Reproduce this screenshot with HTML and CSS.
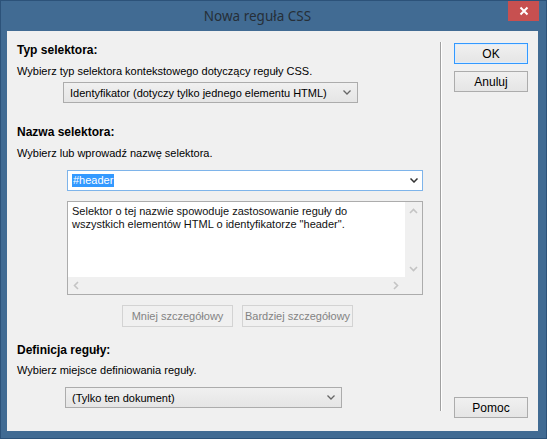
FILE: index.html
```html
<!DOCTYPE html>
<html lang="pl">
<head>
<meta charset="utf-8">
<title>Nowa reguła CSS</title>
<link rel="stylesheet" href="styles.css">
</head>
<body>
<div class="window">
  <div class="titlebar">
    <span class="title">Nowa reguła CSS</span>
    <div class="close">
      <svg width="10" height="10" viewBox="0 0 10 10"><path d="M1.5 1.5 L8.5 8.5 M8.5 1.5 L1.5 8.5" stroke="#fff" stroke-width="2"/></svg>
    </div>
  </div>
  <div class="client">
    <div class="main">
      <div class="heading first">Typ selektora:</div>
      <div class="desc">Wybierz typ selektora kontekstowego dotyczący reguły CSS.</div>
      <div class="select sel-type">
        <span>Identyfikator (dotyczy tylko jednego elementu HTML)</span>
        <svg class="chev" width="8" height="5" viewBox="0 0 8 5"><path d="M0.5 0.5 L4 4 L7.5 0.5" fill="none" stroke="#666" stroke-width="1.3"/></svg>
      </div>

      <div class="heading second">Nazwa selektora:</div>
      <div class="desc">Wybierz lub wprowadź nazwę selektora.</div>
      <div class="combo">
        <span class="hl">#header</span>
        <svg class="chev dark" width="8" height="5" viewBox="0 0 8 5"><path d="M0.5 0.5 L4 4 L7.5 0.5" fill="none" stroke="#333" stroke-width="1.5"/></svg>
      </div>
      <div class="textbox">
        <div class="tb-row">
          <div class="tb-text">Selektor o tej nazwie spowoduje zastosowanie reguły do wszystkich elementów HTML o identyfikatorze "header".</div>
          <div class="vscroll">
            <svg width="9" height="6" viewBox="0 0 9 6"><path d="M1 5 L4.5 1.5 L8 5" fill="none" stroke="#c4c4c4" stroke-width="1.6"/></svg>
            <svg width="9" height="6" viewBox="0 0 9 6"><path d="M1 1 L4.5 4.5 L8 1" fill="none" stroke="#c4c4c4" stroke-width="1.6"/></svg>
          </div>
        </div>
        <div class="hscroll">
          <svg width="6" height="9" viewBox="0 0 6 9"><path d="M5 1 L1.5 4.5 L5 8" fill="none" stroke="#c4c4c4" stroke-width="1.6"/></svg>
          <svg width="6" height="9" viewBox="0 0 6 9"><path d="M1 1 L4.5 4.5 L1 8" fill="none" stroke="#c4c4c4" stroke-width="1.6"/></svg>
          <div class="corner"></div>
        </div>
      </div>
      <div class="spec-buttons">
        <div class="btn disabled">Mniej szczegółowy</div>
        <div class="btn disabled">Bardziej szczegółowy</div>
      </div>

      <div class="heading third">Definicja reguły:</div>
      <div class="desc">Wybierz miejsce definiowania reguły.</div>
      <div class="select sel-def">
        <span>(Tylko ten dokument)</span>
        <svg class="chev" width="8" height="5" viewBox="0 0 8 5"><path d="M0.5 0.5 L4 4 L7.5 0.5" fill="none" stroke="#666" stroke-width="1.3"/></svg>
      </div>
    </div>
    <div class="separator"></div>
    <div class="side">
      <div class="btn default">OK</div>
      <div class="btn cancel">Anuluj</div>
      <div class="spacer"></div>
      <div class="btn help">Pomoc</div>
    </div>
  </div>
</div>
</body>
</html>
```

FILE: styles.css
```css
html, body {
  margin: 0;
  padding: 0;
  background: #416b93;
}

.window {
  width: 547px;
  height: 439px;
  box-sizing: border-box;
  border: 1px solid #2c5279;
  background: #416b93;
  display: flex;
  flex-direction: column;
  font-family: "Liberation Sans", Arial, sans-serif;
  font-size: 11px;
  color: #000;
  white-space: nowrap;
}

.titlebar {
  position: relative;
  height: 29px;
  display: flex;
  align-items: center;
  justify-content: center;
}

.title {
  font-family: "Noto Sans", "Open Sans", sans-serif;
  font-size: 13.5px;
  color: #262f38;
  margin-right: 32px;
  margin-top: 1px;
}

.close {
  position: absolute;
  top: 0;
  right: 7px;
  width: 31px;
  height: 20px;
  background: #c75050;
  display: flex;
  align-items: center;
  justify-content: center;
}

.client {
  margin: 1px 8px 7px 6px;
  height: 400px;
  background: #f0f0f0;
  display: flex;
}

.main {
  width: 423px;
  padding-left: 10px;
  display: flex;
  flex-direction: column;
  align-items: flex-start;
}

.heading {
  font-weight: bold;
  font-size: 12px;
  line-height: 15px;
  height: 15px;
}
.heading.first { margin-top: 12px; }
.heading.second { margin-top: 22px; }
.heading.third { margin-top: 16px; }

.desc {
  line-height: 15px;
  height: 15px;
  margin-top: 6px;
}
.heading.third + .desc { margin-top: 5px; }

.select {
  box-sizing: border-box;
  height: 21px;
  border: 1px solid #acacac;
  background: linear-gradient(#f0f0f0, #e5e5e5);
  display: flex;
  align-items: center;
  justify-content: space-between;
  padding: 0 6px 0 6px;
}
.sel-type {
  margin-top: 3px;
  margin-left: 46px;
  width: 295px;
}
.sel-def {
  margin-top: 9px;
  margin-left: 48px;
  width: 277px;
}

.chev { display: block; }

.combo {
  box-sizing: border-box;
  margin-top: 9px;
  margin-left: 50px;
  width: 356px;
  height: 21px;
  border: 1px solid #7eb4ea;
  background: #fff;
  display: flex;
  align-items: center;
  justify-content: space-between;
  padding: 0 4px 0 4px;
}

.hl {
  background: #3399ff;
  color: #fff;
  line-height: 13px;
  padding: 0 1px;
}

.textbox {
  box-sizing: border-box;
  margin-top: 10px;
  margin-left: 50px;
  width: 356px;
  height: 94px;
  border: 1px solid #acacac;
  background: #f0f0f0;
  display: flex;
  flex-direction: column;
}

.tb-row {
  flex: 1;
  display: flex;
}

.tb-text {
  flex: 1;
  background: #fff;
  padding: 3px 8px 0 4px;
  line-height: 13px;
  color: #111;
  white-space: normal;
}

.vscroll {
  width: 17px;
  display: flex;
  flex-direction: column;
  justify-content: space-between;
  align-items: center;
  padding: 6px 0 5px;
}

.hscroll {
  height: 17px;
  display: flex;
  align-items: center;
  padding-left: 5px;
}
.hscroll svg:nth-child(2) {
  margin-left: auto;
  margin-right: 6px;
}
.corner {
  width: 17px;
  height: 17px;
}

.spec-buttons {
  margin-top: 10px;
  margin-left: 105px;
  display: flex;
  gap: 9px;
}

.btn {
  box-sizing: border-box;
  height: 21px;
  border: 1px solid #acacac;
  background: linear-gradient(#f0f0f0, #e5e5e5);
  display: flex;
  align-items: center;
  justify-content: center;
  font-size: 12px;
}

.btn.disabled {
  width: 111px;
  height: 22px;
  border-color: #d3d3d3;
  background: #f0f0f0;
  color: #838383;
  font-size: 11px;
}

.separator {
  width: 1px;
  margin: 11px 0 20px;
  background: #a0a0a0;
  border-right: 1px solid #fff;
}

.side {
  flex: 1;
  padding: 12px 0 13px 12px;
  display: flex;
  flex-direction: column;
}

.side .btn {
  width: 74px;
}

.btn.default {
  border-color: #3399ff;
  box-shadow: inset 0 0 0 1px #dcecfc;
}

.btn.cancel {
  margin-top: 7px;
}

.spacer { flex: 1; }
```
